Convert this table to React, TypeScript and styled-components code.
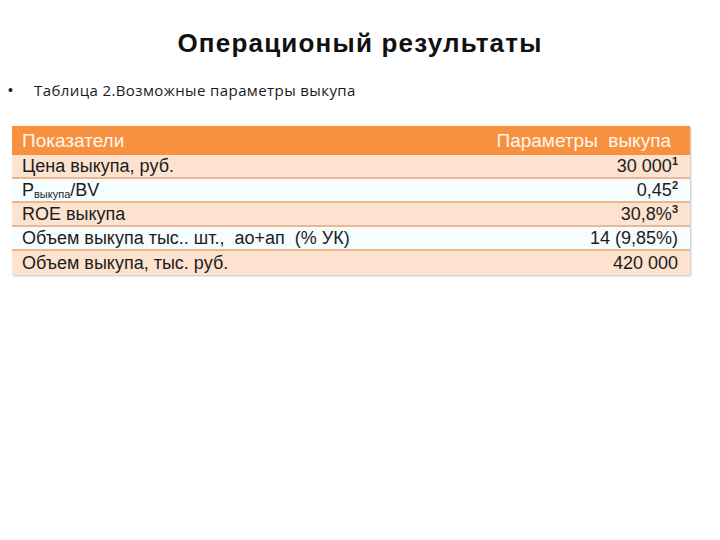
import React from 'react'
import styled, { createGlobalStyle } from 'styled-components'

const GlobalStyle = createGlobalStyle`
  html, body {
    margin: 0;
    padding: 0;
    background: #ffffff;
  }
`

const Slide = styled.div`
  width: 720px;
  height: 540px;
  background: #ffffff;
  padding: 28px 0 0 0;
  box-sizing: border-box;
  overflow: hidden;
`

const Title = styled.h1`
  margin: 0;
  text-align: center;
  font-family: 'Liberation Sans', Arial, sans-serif;
  font-weight: bold;
  font-size: 26px;
  letter-spacing: 1.2px;
  line-height: 30px;
  color: #111111;
`

const Bullet = styled.div`
  display: flex;
  align-items: center;
  margin: 22px 0 0 8px;
  font-family: 'Open Sans', sans-serif;
  font-size: 15px;
  letter-spacing: 0.4px;
  line-height: 20px;
  color: #1a1a1a;

  &::before {
    content: '•';
    width: 26px;
    letter-spacing: 0;
    font-family: 'Liberation Sans', Arial, sans-serif;
    font-size: 14px;
  }
`

const Table = styled.div`
  margin: 26px 0 0 12px;
  width: 678px;
  box-shadow: 1px 1px 2px rgba(0, 0, 0, 0.25);
  font-family: 'Liberation Sans', Arial, sans-serif;
`

const Row = styled.div<{ $kind: 'head' | 'peach' | 'white' }>`
  display: flex;
  justify-content: space-between;
  align-items: center;
  box-sizing: border-box;
  height: ${({ $kind }) => ($kind === 'head' ? '29px' : '24px')};
  padding: ${({ $kind }) => ($kind === 'head' ? '0 19px 0 10px' : '0 12px 0 10px')};
  font-size: ${({ $kind }) => ($kind === 'head' ? '19px' : '18px')};
  white-space: pre;
  color: ${({ $kind }) => ($kind === 'head' ? '#fff6ee' : '#1c1c1c')};
  background: ${({ $kind }) =>
    $kind === 'head' ? '#f7913f' : $kind === 'peach' ? '#fde2cf' : '#f6fdff'};
  border-bottom: ${({ $kind }) => ($kind === 'head' ? 'none' : '2px solid #ebb791')};

  &:last-child {
    border-bottom: none;
  }
`

const Sup = styled.sup`
  font-size: 11px;
  font-weight: bold;
  vertical-align: 7px;
  line-height: 0;
`

const Sub = styled.sub`
  font-size: 11px;
  vertical-align: -2px;
  line-height: 0;
`

export default function App() {
  return (
    <>
      <GlobalStyle />
      <Slide>
        <Title>Операционый результаты</Title>
        <Bullet>Таблица 2.Возможные параметры выкупа</Bullet>
        <Table>
          <Row $kind="head">
            <span>Показатели</span>
            <span>Параметры  выкупа</span>
          </Row>
          <Row $kind="peach">
            <span>Цена выкупа, руб.</span>
            <span>
              30 000<Sup>1</Sup>
            </span>
          </Row>
          <Row $kind="white">
            <span>
              P<Sub>выкупа</Sub>/BV
            </span>
            <span>
              0,45<Sup>2</Sup>
            </span>
          </Row>
          <Row $kind="peach">
            <span>ROE выкупа</span>
            <span>
              30,8%<Sup>3</Sup>
            </span>
          </Row>
          <Row $kind="white">
            <span>Объем выкупа тыс.. шт.,  ао+ап  (% УК)</span>
            <span>14 (9,85%)</span>
          </Row>
          <Row $kind="peach">
            <span>Объем выкупа, тыс. руб.</span>
            <span>420 000</span>
          </Row>
        </Table>
      </Slide>
    </>
  )
}
